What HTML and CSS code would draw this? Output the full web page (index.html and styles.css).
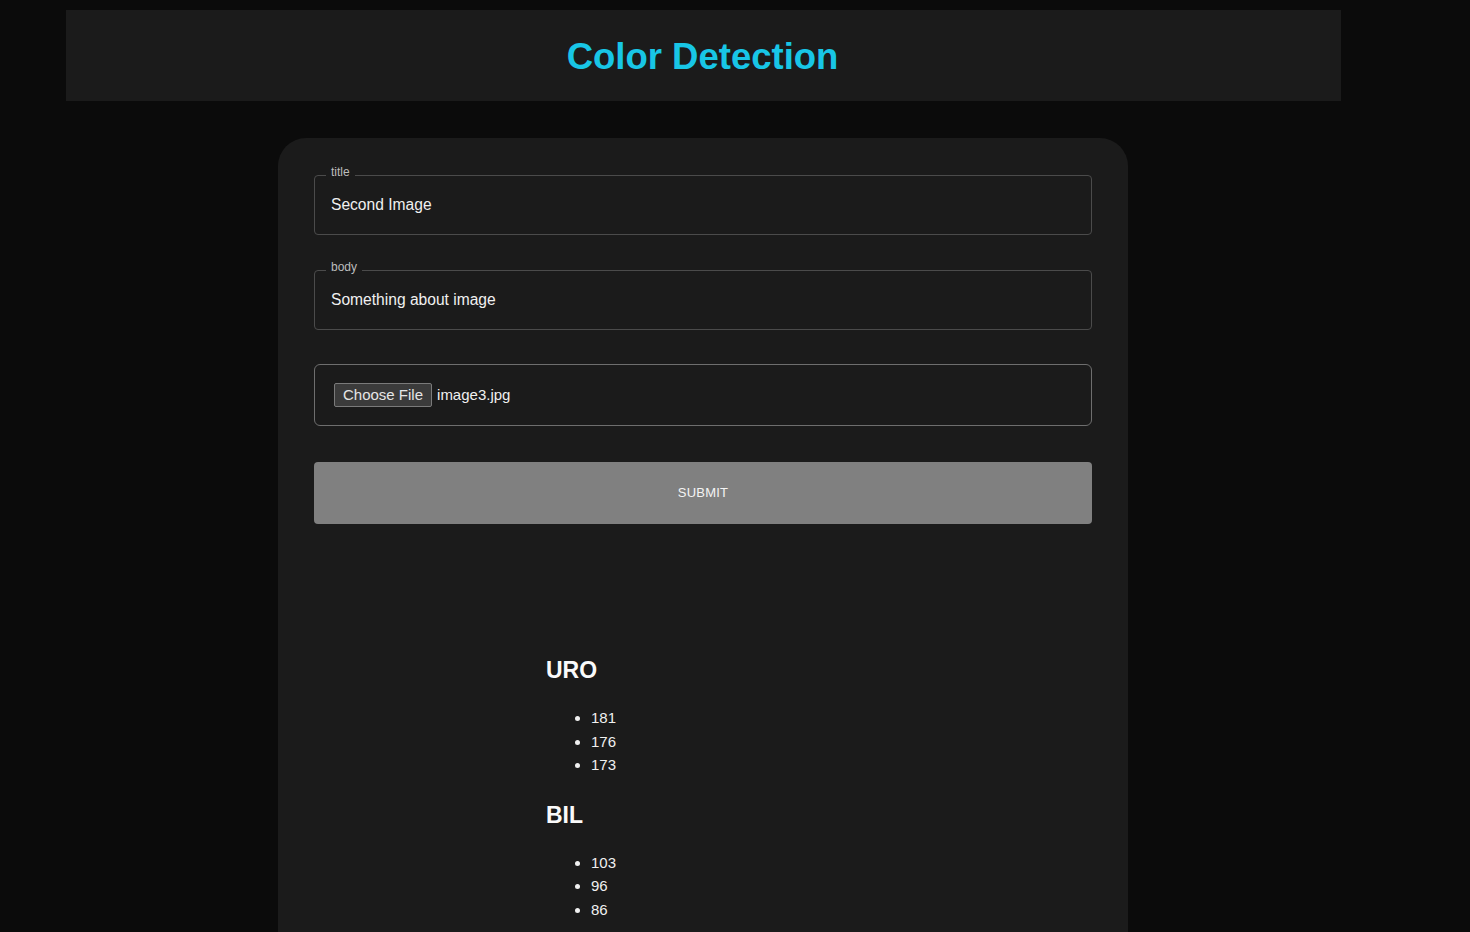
FILE: index.html
```html
<!DOCTYPE html>
<html lang="en">
<head>
<meta charset="utf-8">
<title>Color Detection</title>
<link rel="stylesheet" href="styles.css">
</head>
<body>
<header class="topbar">
  <h1 class="app-title">Color Detection</h1>
</header>
<main class="card">
  <form class="form">
    <div class="field">
      <span class="field-label">title</span>
      <input class="field-input" type="text" value="Second Image">
    </div>
    <div class="field">
      <span class="field-label">body</span>
      <input class="field-input" type="text" value="Something about image">
    </div>
    <div class="file-field">
      <span class="file-btn">Choose File</span>
      <span class="file-name">image3.jpg</span>
    </div>
    <button class="submit" type="button">SUBMIT</button>
  </form>
  <section class="results">
    <h3 class="result-title">URO</h3>
    <ul class="result-list">
      <li>181</li>
      <li>176</li>
      <li>173</li>
    </ul>
    <h3 class="result-title">BIL</h3>
    <ul class="result-list">
      <li>103</li>
      <li>96</li>
      <li>86</li>
    </ul>
  </section>
</main>
</body>
</html>
```
FILE: styles.css
```css
html, body {
  margin: 0;
  padding: 0;
}
body {
  background: #0b0b0b;
  font-family: "Liberation Sans", Arial, sans-serif;
  color: #f2f2f2;
  padding: 10px 0 0 66px;
  width: 1275px;
}
.topbar {
  background: #1b1b1b;
  height: 91px;
  display: flex;
  align-items: center;
  justify-content: center;
}
.app-title {
  margin: 0;
  font-size: 36.5px;
  font-weight: 700;
  color: #18c6e6;
  line-height: 40px;
  position: relative;
  left: -1px;
  top: 1px;
}
.card {
  background: #1b1b1b;
  width: 778px;
  margin: 37px 0 0 212px;
  padding: 37px 36px 40px;
  border-radius: 28px 28px 0 0;
  min-height: 720px;
}
.form {
  display: flex;
  flex-direction: column;
}
.field {
  position: relative;
  height: 58px;
  border: 1px solid #4b4b4b;
  border-radius: 4px;
  display: flex;
  align-items: center;
}
.field + .field {
  margin-top: 35px;
}
.field-label {
  position: absolute;
  top: -11px;
  left: 11px;
  padding: 0 5px;
  background: #1b1b1b;
  font-size: 12px;
  line-height: 14px;
  color: #bdbdbd;
}
.field-input {
  width: 100%;
  background: transparent;
  border: 0;
  outline: none;
  padding: 0 16px;
  font-family: "Liberation Sans", Arial, sans-serif;
  font-size: 15.6px;
  color: #f0f0f0;
  margin-top: 0;
}
.file-field {
  margin-top: 34px;
  height: 60px;
  border: 1px solid #6e6e6e;
  border-radius: 6px;
  display: flex;
  align-items: center;
  padding-left: 19px;
  gap: 5px;
}
.file-btn {
  height: 22px;
  padding: 0 8px;
  background: #3b3b3b;
  border: 1px solid #7a7a7a;
  border-radius: 2px;
  font-size: 15px;
  line-height: 22px;
  color: #e6e6e6;
  margin-top: -1px;
}
.file-name {
  font-size: 15px;
  color: #f0f0f0;
  margin-top: -2px;
}
.submit {
  margin-top: 36px;
  height: 62px;
  border: 0;
  border-radius: 4px;
  background: #808080;
  color: #f4f4f4;
  font-family: "Liberation Sans", Arial, sans-serif;
  font-size: 13px;
  letter-spacing: 0.2px;
  padding-bottom: 2px;
}
.results {
  width: 314px;
  margin: 132px auto 0;
}
.result-title {
  margin: 24px 0 0;
  font-size: 23px;
  line-height: 28px;
  font-weight: 700;
  color: #fafafa;
}
.result-title:first-child {
  margin-top: 0;
}
.result-list {
  margin: 22px 0 0;
  padding-left: 45px;
  font-size: 15px;
  line-height: 23.5px;
  color: #f0f0f0;
}
```
